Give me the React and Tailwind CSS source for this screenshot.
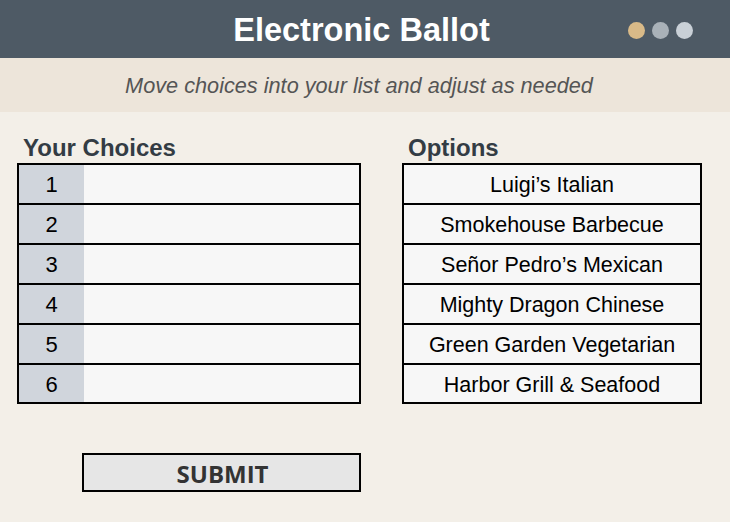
export default function App() {
  const options = [
    "Luigi\u2019s Italian",
    "Smokehouse Barbecue",
    "Se\u00f1or Pedro\u2019s Mexican",
    "Mighty Dragon Chinese",
    "Green Garden Vegetarian",
    "Harbor Grill & Seafood",
  ];
  const sans = { fontFamily: '"Liberation Sans", Arial, sans-serif' };
  return (
    <div className="w-[730px] h-[522px] bg-[#f3efe8] overflow-hidden" style={sans}>
      <div className="h-[58px] bg-[#4e5a65] relative flex items-center justify-center">
        <div className="text-white font-bold text-[32.5px] leading-none pr-[7px] pt-[3px]">Electronic Ballot</div>
        <div className="absolute right-[37px] top-[22px] flex gap-[7px]">
          <div className="w-[17px] h-[17px] rounded-full bg-[#d9ba88]" />
          <div className="w-[17px] h-[17px] rounded-full bg-[#a9b1b8]" />
          <div className="w-[17px] h-[17px] rounded-full bg-[#c9d0d7]" />
        </div>
      </div>
      <div className="h-[54px] bg-[#ede5da] flex items-center justify-center">
        <div className="italic text-[21.7px] text-[#555555] pr-[12px] pt-[2px]">Move choices into your list and adjust as needed</div>
      </div>
      <div className="flex pl-[17px] pt-[22px] gap-[41px]">
        <div className="flex flex-col w-[344px]">
          <div className="h-[28px] leading-[28px] text-[24px] font-bold text-[#333c44] pl-[6px] mb-[1px]">Your Choices</div>
          <div className="border-2 border-black flex flex-col">
            {[1, 2, 3, 4, 5, 6].map((n, i) => (
              <div key={n} className={"flex " + (i < 5 ? "border-b-2 border-black h-[40px]" : "h-[37px]")}>
                <div className="w-[65px] bg-[#d0d5dc] flex items-center justify-center text-[22px] text-black pt-[1px]">{n}</div>
                <div className="flex-1 bg-[#f7f7f7]" />
              </div>
            ))}
          </div>
          <div className="mt-[49px] ml-[65px] h-[39px] border-2 border-black bg-[#e6e6e6] flex items-center justify-center text-[24px] font-bold text-[#333333] pt-[2px] pl-[2px]" style={{ fontFamily: '"Open Sans", sans-serif' }}>
            SUBMIT
          </div>
        </div>
        <div className="flex flex-col w-[300px]">
          <div className="h-[28px] leading-[28px] text-[24px] font-bold text-[#333c44] pl-[6px] mb-[1px]">Options</div>
          <div className="border-2 border-black flex flex-col bg-[#f7f7f7]">
            {options.map((o, i) => (
              <div key={o} className={"flex items-center justify-center text-[21.5px] text-black pt-[3px] " + (i < 5 ? "border-b-2 border-black h-[40px]" : "h-[37px]")}>
                {o}
              </div>
            ))}
          </div>
        </div>
      </div>
    </div>
  );
}
